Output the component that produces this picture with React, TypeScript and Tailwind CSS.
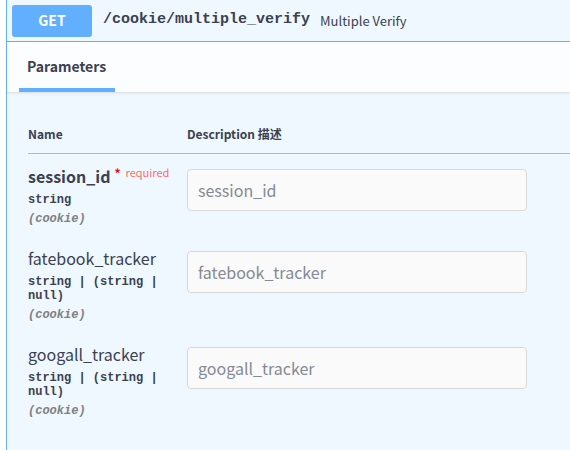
import React from "react";

const sans = { fontFamily: '"Noto Sans CJK SC", "Noto Sans", sans-serif' };
const mono = { fontFamily: '"Liberation Mono", "DejaVu Sans Mono", monospace' };

type Row = { name: string; required?: boolean; type: string };

const rows: Row[] = [
  { name: "session_id", required: true, type: "string" },
  { name: "fatebook_tracker", type: "string | (string | null)" },
  { name: "googall_tracker", type: "string | (string | null)" },
];

export default function App() {
  return (
    <div className="w-[570px] h-[450px] bg-white overflow-hidden flex pl-[6px] text-[#3b4151]" style={sans}>
      <div className="flex-1 flex flex-col border-l border-[#61affe] bg-[#eff7ff]">
        {/* summary */}
        <div className="h-[42px] shrink-0 flex items-center border-b border-[#61affe] pl-[5px]">
          <div className="w-[80px] h-[32px] rounded-[3px] bg-[#61affe] text-white font-bold text-[14px] flex items-center justify-center">
            GET
          </div>
          <span className="ml-[11px] font-bold text-[15px] text-[#3b4151]" style={mono}>
            /cookie/multiple_verify
          </span>
          <span className="ml-[10px] text-[13px] text-[#3b4151]">Multiple Verify</span>
        </div>
        {/* tab header */}
        <div className="h-[51px] shrink-0 bg-[#fbfdff] border-b border-[#dfe4ea] shadow-[0_1px_2px_rgba(0,0,0,0.06)] flex items-end pl-[12px]">
          <div className="w-[96px] h-full flex flex-col">
            <div className="flex-1 flex items-center pl-[8px] text-[14px] font-bold pt-[3px]">Parameters</div>
            <div className="h-[4px] bg-[#61affe]" />
          </div>
        </div>
        {/* table */}
        <div className="pl-[21px] pt-[21px]">
          <div className="flex h-[40px] items-center border-b border-[#b3b9c4] text-[12px] font-bold">
            <div className="w-[159px]">Name</div>
            <div>Description 描述</div>
          </div>
          {rows.map((r) => (
            <div key={r.name} className="flex py-[10px]">
              <div className="w-[159px] pr-[10px]">
                <div className="h-[24px] flex items-center">
                  <span className={`text-[16px] leading-[24px] ${r.required ? "font-semibold" : ""}`}>{r.name}</span>
                  {r.required && (
                    <span className="relative -top-[3px] ml-[4px] text-[#ff0000] text-[12px] font-bold">*</span>
                  )}
                  {r.required && (
                    <span className="relative -top-[4px] ml-[5px] text-[11px] text-[#ff6b6b]">required</span>
                  )}
                </div>
                <div className="py-[5px] text-[12px] leading-[14px] font-bold text-[#3b4151]" style={mono}>
                  {r.type}
                </div>
                <div className="text-[12px] leading-[14px] italic text-[#808080] font-bold" style={mono}>
                  (cookie)
                </div>
              </div>
              <div className="pt-[5px]">
                <input
                  className="w-[340px] h-[42px] rounded-[4px] border border-[#d9d9d9] bg-[#fafafa] px-[10px] text-[16px] placeholder:text-[#848a95] outline-none"
                  style={sans}
                  placeholder={r.name}
                  readOnly
                />
              </div>
            </div>
          ))}
        </div>
      </div>
    </div>
  );
}
